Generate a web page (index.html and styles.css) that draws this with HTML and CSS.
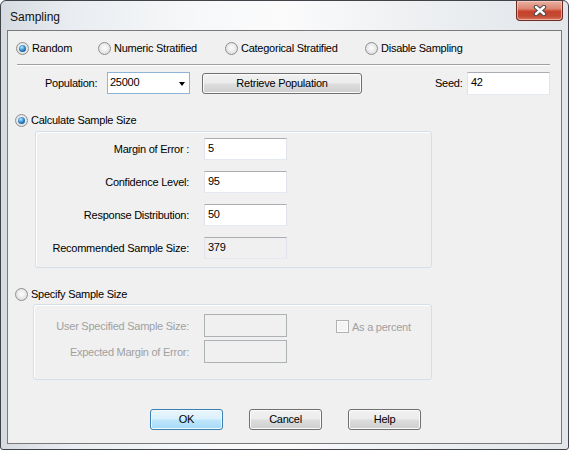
FILE: index.html
```html
<!DOCTYPE html>
<html>
<head>
<meta charset="utf-8">
<link rel="stylesheet" href="styles.css">
</head>
<body>
<div class="window">
  <div class="titlebar">
    <span class="title">Sampling</span>
    <div class="close">
      <svg width="14" height="11" viewBox="0 0 14 11">
        <path d="M3 2 L11 9 M11 2 L3 9" stroke="#4a4a4a" stroke-width="4.4" stroke-linecap="round"/>
        <path d="M3 2 L11 9 M11 2 L3 9" stroke="#ffffff" stroke-width="2.4" stroke-linecap="round"/>
      </svg>
    </div>
  </div>
  <div class="client">
    <div class="mode-row">
      <label class="opt w1"><span class="radio on"></span><span>Random</span></label>
      <label class="opt w2"><span class="radio"></span><span>Numeric Stratified</span></label>
      <label class="opt w3"><span class="radio"></span><span>Categorical Stratified</span></label>
      <label class="opt"><span class="radio"></span><span>Disable Sampling</span></label>
    </div>
    <div class="separator"></div>
    <div class="pop-row">
      <span class="pop-label">Population:</span>
      <div class="combo"><span>25000</span><span class="arrow"></span></div>
      <div class="btn retrieve">Retrieve Population</div>
      <span class="seed-label">Seed:</span>
      <div class="textbox seed">42</div>
    </div>
    <label class="opt section calc"><span class="radio on"></span><span>Calculate Sample Size</span></label>
    <div class="group group1">
      <div class="field"><span class="flabel">Margin of Error :</span><div class="textbox">5</div></div>
      <div class="field"><span class="flabel">Confidence Level:</span><div class="textbox">95</div></div>
      <div class="field"><span class="flabel">Response Distribution:</span><div class="textbox">50</div></div>
      <div class="field"><span class="flabel">Recommended Sample Size:</span><div class="textbox readonly">379</div></div>
    </div>
    <label class="opt section spec"><span class="radio"></span><span>Specify Sample Size</span></label>
    <div class="group group2">
      <div class="field"><span class="flabel disabled">User Specified Sample Size:</span><div class="textbox off"></div>
        <label class="check"><span class="box"></span><span class="disabled">As a percent</span></label>
      </div>
      <div class="field"><span class="flabel disabled">Expected Margin of Error:</span><div class="textbox off"></div></div>
    </div>
    <div class="buttons">
      <div class="btn default">OK</div>
      <div class="btn">Cancel</div>
      <div class="btn">Help</div>
    </div>
  </div>
</div>
</body>
</html>
```
FILE: styles.css
```css
html, body { margin: 0; padding: 0; background: #ffffff; }
body { font-family: "Liberation Sans", Arial, sans-serif; font-size: 11px; letter-spacing: -0.25px; color: #000; }

.window {
  width: 569px; height: 450px; box-sizing: border-box;
  border: 1px solid #404448; border-radius: 6px 6px 3px 3px;
  background: linear-gradient(90deg, #d6dbe1 0%, #e9edf1 12%, #f7f8f9 35%, #fbfbfc 50%, #eef0f2 72%, #e2e6ea 100%);
  padding-bottom: 5px;
  display: flex; flex-direction: column;
}
.titlebar { height: 29px; display: flex; align-items: flex-start; }
.title { font-size: 12px; letter-spacing: 0; margin: 9px 0 0 9px; line-height: 14px; color: #111; }
.close {
  margin-left: auto; margin-right: 5px; margin-top: 0;
  width: 47px; height: 20px; box-sizing: border-box;
  border: 1px solid #6b2b22; border-top: none; border-radius: 0 0 4px 4px;
  background: linear-gradient(#eab2a6 0%, #dd8672 40%, #c8432d 55%, #c24a32 80%, #d9775f 100%);
  box-shadow: inset 0 0 0 1px rgba(255,210,200,0.6);
  display: flex; align-items: center; justify-content: center;
}
.close svg { display: block; }

.client {
  margin: 0 6px; flex: 1; box-sizing: border-box;
  border: 1px solid #7a7a7a; background: #f0f0f0;
  display: flex; flex-direction: column; align-items: flex-start;
}

.opt { display: flex; align-items: center; height: 13px; line-height: 13px; white-space: nowrap; }
.radio {
  width: 13px; height: 13px; box-sizing: border-box; border-radius: 50%;
  border: 1px solid #8e8f8f;
  background: radial-gradient(circle at 50% 45%, #fdfdfd 0%, #ececec 45%, #d2d2d2 100%);
  margin-right: 3px; flex: none; position: relative;
}
.radio.on::after {
  content: ""; position: absolute; left: 2px; top: 2px; width: 7px; height: 7px; border-radius: 50%;
  background: radial-gradient(circle at 40% 35%, #c4ecff 0%, #4aa3e0 35%, #17609f 70%, #0c3d70 100%);
}

.mode-row { display: flex; margin: 11px 0 0 8px; }
.w1 { width: 82px; }
.w2 { width: 127px; }
.w3 { width: 140px; }

.separator { margin: 9px 0 0 9px; width: 533px; height: 1px; background: #a0a0a0; border-bottom: 1px solid #ffffff; }

.pop-row { display: flex; align-items: flex-start; margin: 6px 0 0 37px; }
.pop-label { width: 62px; line-height: 22px; }
.combo {
  width: 83px; height: 22px; box-sizing: border-box; border: 1px solid #8fb4d8;
  background: #fff; display: flex; align-items: flex-start; padding: 2px 0 0 2px; line-height: 14px;
  position: relative;
}
.arrow {
  position: absolute; right: 4px; top: 9px; width: 0; height: 0;
  border-left: 3.5px solid transparent; border-right: 3.5px solid transparent; border-top: 4px solid #000;
}
.btn {
  width: 73px; height: 21px; box-sizing: border-box;
  border: 1px solid #707070; border-radius: 3px;
  background: linear-gradient(#f2f2f2 0%, #ebebeb 48%, #dddddd 52%, #cfcfcf 100%);
  box-shadow: inset 0 0 0 1px #fbfbfb;
  text-align: center; line-height: 19px;
}
.btn.default {
  border-color: #3c7fb1;
  background: linear-gradient(#eaf6fd 0%, #d9f0fc 48%, #bee6fd 52%, #a7d9f5 100%);
  box-shadow: inset 0 0 0 1px #f3fafe;
}
.retrieve { width: 160px; margin: 1px 0 0 12px; }
.seed-label { width: 32px; margin-left: 73px; line-height: 22px; }

.textbox {
  width: 83px; height: 22px; box-sizing: border-box; background: #fff;
  border: 1px solid #e2e3ea; border-top-color: #abadb3; border-bottom-color: #e3e9ef;
  padding: 0 3px; line-height: 18px; flex: none;
}
.textbox.seed { height: 23px; }
.textbox.readonly { background: #f0f0f0; }
.textbox.off { background: #f0f0f0; border-color: #adb2b5; }

.section { margin-left: 7px; }
.calc { margin-top: 19px; }
.spec { margin-top: 20px; }

.group {
  box-sizing: border-box; border: 1px solid #d5dfe5; border-radius: 3px;
  box-shadow: inset 1px 1px 0 #fff;
  display: flex; flex-direction: column;
}
.group1 { margin: 4px 0 0 27px; width: 397px; height: 137px; padding-top: 6px; gap: 11px; }
.group2 { margin: 3px 0 0 25px; width: 399px; height: 76px; padding-top: 9px; gap: 3px; }

.field { display: flex; align-items: center; height: 22px; }
.group2 .field { height: 23px; }
.group2 .textbox { height: 23px; }
.flabel { text-align: right; margin-right: 15px; line-height: 22px; }
.group1 .flabel { width: 153px; }
.group2 .flabel { width: 155px; }
.disabled { color: #a0a0a0; }

.check { display: flex; align-items: center; margin-left: 49px; margin-top: 2px; }
.box {
  width: 13px; height: 13px; box-sizing: border-box; border: 1px solid #b1b1b1;
  background: #f4f4f4; box-shadow: inset 0 0 0 1px #fcfcfc; margin-right: 3px;
}

.buttons { display: flex; gap: 26px; margin: 29px 0 0 142px; }
```
